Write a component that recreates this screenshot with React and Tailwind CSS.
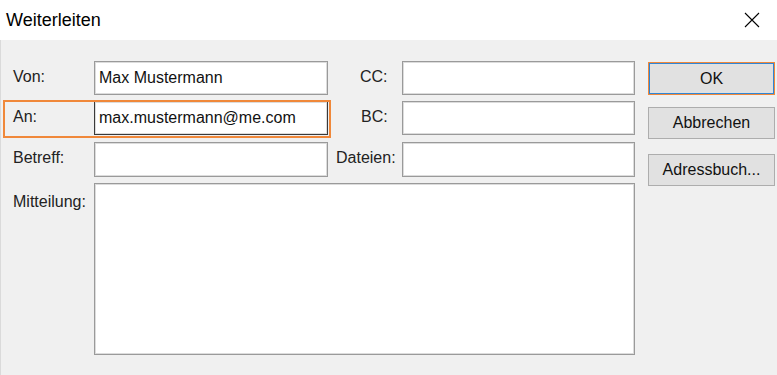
import React from 'react';

const inputBase =
  'bg-white border shadow-[inset_1px_1px_0_#dcdcdc,inset_-1px_-1px_0_#dcdcdc] px-[4px] flex items-center text-[16px] text-[#111]';

function Field({ value = '', focused = false, className = '' }) {
  return (
    <div
      className={`${inputBase} ${focused ? 'border-[#3a3a3a]' : 'border-[#9a9a9a]'} ${className}`}
    >
      {value}
    </div>
  );
}

function Button({ children, primary = false, className = '' }) {
  return (
    <div
      className={`w-[127px] flex items-center justify-center bg-[#e1e1e1] text-[16px] text-[#111] ${
        primary
          ? 'border border-[#f0883a] shadow-[inset_0_0_0_1px_#2f86d6]'
          : 'border border-[#adadad]'
      } ${className}`}
    >
      {children}
    </div>
  );
}

export default function App() {
  return (
    <div
      className="w-[777px] h-[375px] overflow-hidden bg-white text-[#222]"
      style={{ fontFamily: '"Liberation Sans", Arial, sans-serif' }}
    >
      {/* Titelleiste */}
      <div className="h-[40px] flex items-center justify-between pl-[6px] pr-[17px]">
        <span className="text-[18px] text-black">Weiterleiten</span>
        <svg width="16" height="16" viewBox="0 0 16 16" className="text-black">
          <path d="M1 1L15 15M15 1L1 15" stroke="currentColor" strokeWidth="1.1" fill="none" />
        </svg>
      </div>

      {/* Inhalt */}
      <div className="h-[335px] bg-[#f0f0f0] border-l border-[#dadada] flex pt-[21px] pl-[3px]">
        <div className="w-[631px] flex flex-col text-[16px]">
          {/* Von / CC */}
          <div className="flex h-[34px]">
            <div className="w-[327px] flex items-center">
              <span className="w-[90px] pl-[9px] pb-[3px]">Von:</span>
              <Field value="Max Mustermann" className="w-[234px] h-full" />
            </div>
            <span className="w-[71px] pl-[29px] flex items-center pb-[3px]">CC:</span>
            <Field className="w-[233px] h-full" />
          </div>

          {/* An / BC */}
          <div className="flex h-[34px] mt-[6px]">
            <div className="w-[327px] flex items-center relative">
              <div className="absolute left-[-1px] top-[-1px] right-0 bottom-[-3px] border-2 border-[#f0883a]"></div>
              <span className="w-[90px] pl-[9px] pb-[3px]">An:</span>
              <Field value="max.mustermann@me.com" focused className="w-[234px] h-full" />
            </div>
            <span className="w-[71px] pl-[30px] flex items-center pb-[3px]">BC:</span>
            <Field className="w-[233px] h-full" />
          </div>

          {/* Betreff / Dateien */}
          <div className="flex h-[35px] mt-[7px]">
            <div className="w-[327px] flex items-center">
              <span className="w-[90px] pl-[9px] pb-[3px]">Betreff:</span>
              <Field className="w-[234px] h-full" />
            </div>
            <span className="w-[71px] pl-[5px] flex items-center pb-[3px]">Dateien:</span>
            <Field className="w-[233px] h-full" />
          </div>

          {/* Mitteilung */}
          <div className="flex h-[172px] mt-[6px]">
            <span className="w-[90px] pl-[9px] pt-[7px]">Mitteilung:</span>
            <div className="flex-1 bg-white border border-[#9a9a9a] shadow-[inset_1px_1px_0_#dcdcdc,inset_-1px_-1px_0_#dcdcdc]"></div>
          </div>
        </div>

        {/* Schaltflächen */}
        <div className="ml-[13px] flex flex-col">
          <Button primary className="h-[33px] mt-[1px]">OK</Button>
          <Button className="h-[32px] mt-[12px]">Abbrechen</Button>
          <Button className="h-[32px] mt-[15px]">Adressbuch...</Button>
        </div>
      </div>
    </div>
  );
}
